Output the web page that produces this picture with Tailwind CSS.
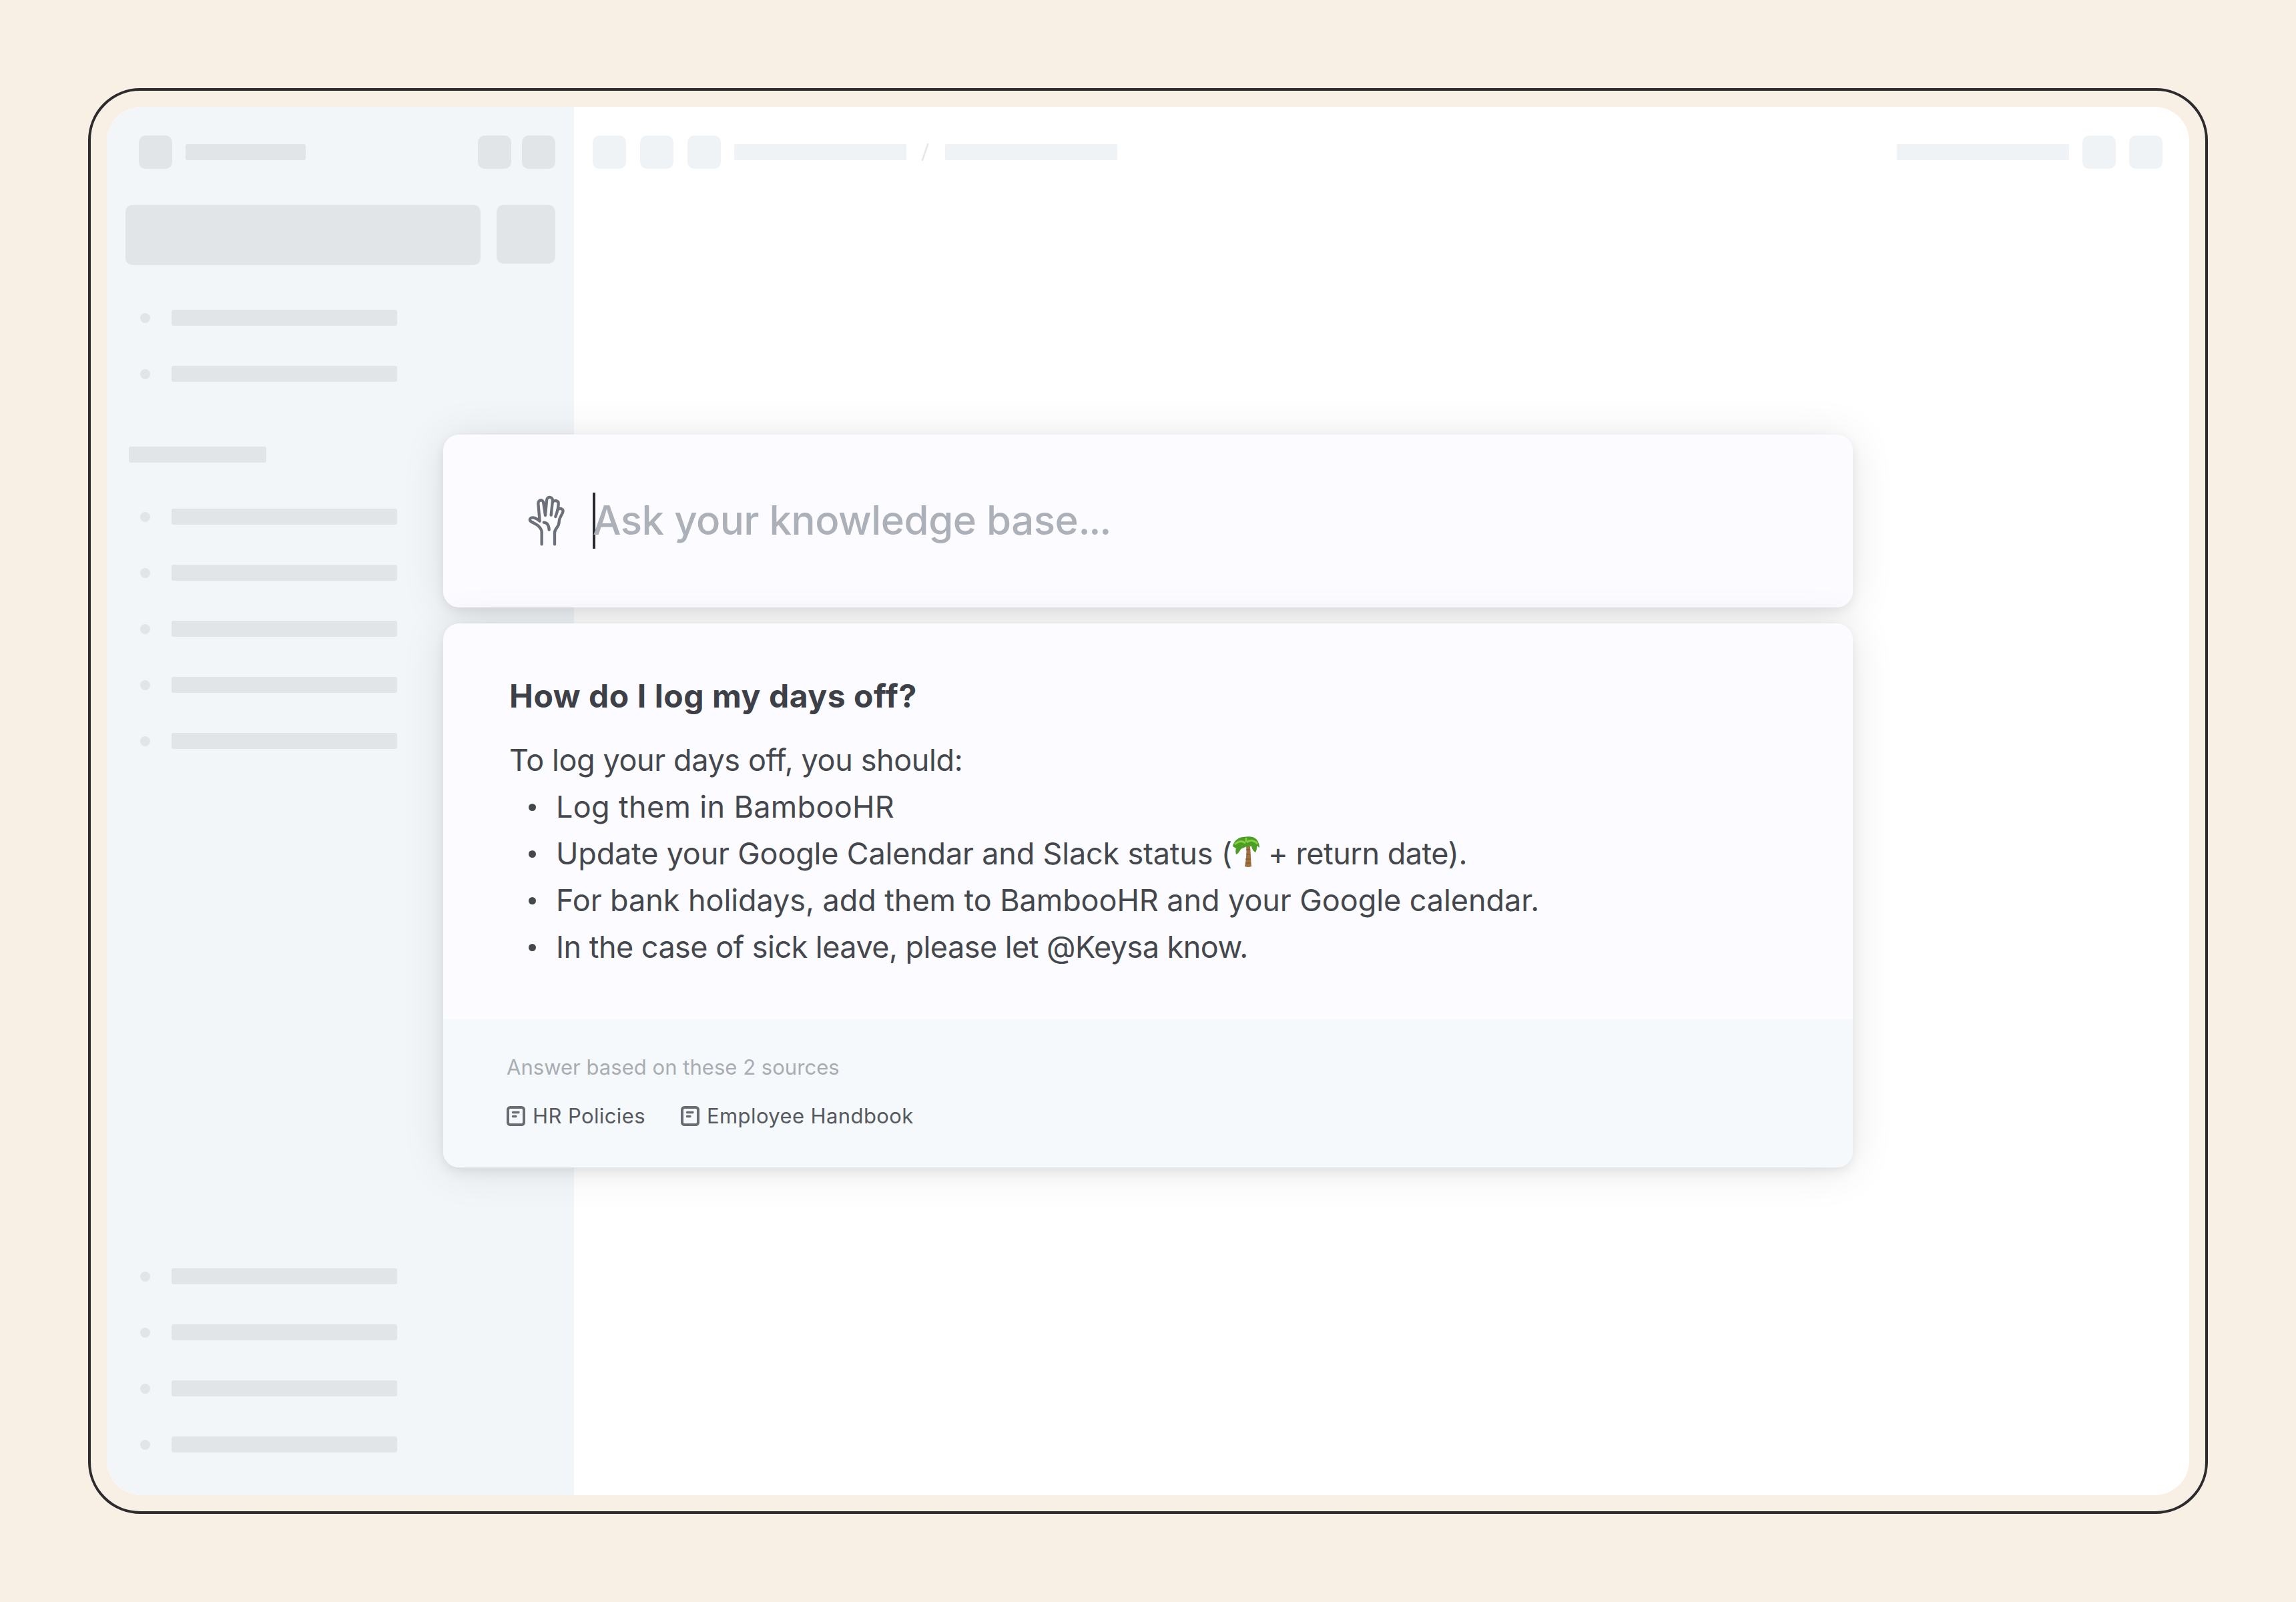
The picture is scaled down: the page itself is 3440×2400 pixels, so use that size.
<!DOCTYPE html>
<html lang="en">
<head>
  <meta charset="UTF-8" />
  <meta name="viewport" content="width=device-width, initial-scale=1.0"/>
  <title>Ask your knowledge base</title>
  <!-- Load Tailwind CSS -->
  <script src="https://cdn.jsdelivr.net/npm/@tailwindcss/browser@4"></script>
</head>
<body class="w-[3440px] h-[2400px] p-[132px] bg-[#f9f0e5] font-['Inter',sans-serif] overflow-hidden">

  <!-- Outlined frame around the app window -->
  <div class="relative h-full p-6 border-4 border-[#2d2b2b] rounded-[78px]">
    <div class="flex h-full bg-white rounded-[52px] overflow-hidden">

      <!-- Sidebar skeleton -->
      <aside class="flex flex-col w-[700px] h-full bg-[#f2f6f9] pt-[43px] pb-16">
        <div class="flex items-center pl-12 pr-7">
          <div class="size-[50px] rounded-[10px] bg-[#e1e5e8]"></div>
          <div class="ml-5 w-[180px] h-6 rounded-[3px] bg-[#e1e5e8]"></div>
          <div class="ml-auto size-[50px] rounded-[10px] bg-[#e1e5e8]"></div>
          <div class="ml-4 size-[50px] rounded-[10px] bg-[#e1e5e8]"></div>
        </div>

        <div class="flex items-start justify-between mt-[54px] pl-7 pr-7">
          <div class="w-[532px] h-[90px] rounded-[10px] bg-[#e1e5e8]"></div>
          <div class="w-[88px] h-[88px] rounded-[10px] bg-[#e1e5e8]"></div>
        </div>

        <ul class="flex flex-col gap-[60px] mt-[67px] pl-[50px]" data-rows="2"></ul>

        <div class="ml-[33px] mt-[97px] w-[206px] h-6 rounded-[3px] bg-[#e1e5e8]"></div>
        <ul class="flex flex-col gap-[60px] mt-[69px] pl-[50px]" data-rows="5"></ul>

        <ul class="flex flex-col gap-[60px] mt-auto pl-[50px]" data-rows="4"></ul>
      </aside>

      <!-- Top bar skeleton -->
      <main class="flex-1 pt-[43px] pl-7 pr-10">
        <div class="flex items-center">
          <div class="flex gap-[21px]">
            <div class="size-[50px] rounded-[10px] bg-[#f0f3f6]"></div>
            <div class="size-[50px] rounded-[10px] bg-[#f0f3f6]"></div>
            <div class="size-[50px] rounded-[10px] bg-[#f0f3f6]"></div>
          </div>
          <div class="ml-5 w-[258px] h-6 rounded-[2px] bg-[#f0f3f6]"></div>
          <svg class="ml-[22px] w-3 h-[26px]" viewBox="0 0 12 26" fill="none" stroke="#e4e6e9" stroke-width="2.5"><path d="M10.5 0 1.5 26"/></svg>
          <div class="ml-6 w-[258px] h-6 rounded-[2px] bg-[#f0f3f6]"></div>
          <div class="ml-auto w-[258px] h-6 rounded-[2px] bg-[#f0f3f6]"></div>
          <div class="ml-5 size-[50px] rounded-[10px] bg-[#f0f3f6]"></div>
          <div class="ml-5 size-[50px] rounded-[10px] bg-[#f0f3f6]"></div>
        </div>
      </main>
    </div>

    <!-- Ask dialog, floats over the app -->
    <div class="absolute left-[528px] top-[515px] w-[2112px] flex flex-col gap-6">
      <div class="flex items-center h-[259px] pl-[126px] rounded-3xl bg-[#fcfbff] shadow-[0_6px_16px_rgba(0,0,0,0.07),0_4px_64px_rgba(0,0,0,0.1)]">
        <svg class="w-[57px] h-[77px] -mt-0.5" viewBox="60 64 171 231" fill="none" stroke="#6b707b" stroke-width="13" stroke-linecap="round" stroke-linejoin="round">
          <path d="M125 287V232C125 220 119 213 108 203C98 195 90 192 80 187C70 182 70 176 74 171C82 163 100 168 116 183L109 103C109 86 131 84 133 102L141 157L147 92C147 70 173 71 174 90L167 156"/>
          <path d="M175 95C185 88 201 91 200 105C200 123 195 141 187 163"/>
          <path d="M200 129C211 123 223 130 220 141C217 154 203 168 203 186C203 211 183 215 183 235V287"/>
          <path d="M134 189C150 190 157 201 158 222"/>
        </svg>
        <div class="ml-[41px] w-1 h-[84px] -mt-0.5 bg-[#27292c]"></div>
        <div class="-ml-1 -mt-1 text-[60px] leading-none font-medium text-[#acb0b8] whitespace-nowrap tracking-[-0.5px]">Ask your knowledge base<span class="tracking-[-2.3px]">...</span></div>
      </div>

      <div class="h-[815px] rounded-3xl overflow-hidden bg-[#fcfbff] shadow-[0_6px_16px_rgba(0,0,0,0.07),0_4px_64px_rgba(0,0,0,0.1)]">
        <div class="h-[593px] pt-[74px] pl-[99px] text-[45px] leading-[70px] text-[#44474c] whitespace-nowrap">
          <h2 class="text-[48px] font-bold text-[#3d4046] tracking-[0.55px]">How do I log my days off?</h2>
          <p class="mt-[26px] tracking-[-0.4px]">To log your days off, you should:</p>
          <ul class="pl-[29px]">
            <li class="flex items-center gap-[30px]"><span class="size-[11px] rounded-full bg-[#44474c]"></span><span class="tracking-[0.33px]">Log them in BambooHR</span></li>
            <li class="flex items-center gap-[30px]"><span class="size-[11px] rounded-full bg-[#44474c]"></span><span class="tracking-[-0.2px]">Update your Google Calendar and Slack status (<svg class="inline-block w-[42px] h-[46px] -mt-3.5" viewBox="0 0 42 46">
                <path d="M21 13c4-2 5 0 6 3 1 9 1 20 2 29q-5 2-10 0c2-10 3-20 2-32z" fill="#a0703f"/>
                <path d="M21 20h6M21 27h6M20 34h8M20 40h8" stroke="#7a5230" stroke-width="1.2"/>
                <path d="M22 15C17 18 14 17 12 21c-2 3-3 5-6 6-1-4-1-6 0-9l-5-3C2 7 10 1 17 1c5-1 10-1 14 0 6 2 10 8 10 16l-4-3c0 4 0 7-2 10-4-2-5-6-6-9z" fill="#4c9f22"/>
                <path d="M20 10C15 6 9 7 4 12M22 9c4-4 10-4 16 2M21 8V2" stroke="#86ce45" stroke-width="3" fill="none"/>
              </svg><span class="tracking-[-0.5px]"> + return date).</span></span></li>
            <li class="flex items-center gap-[30px]"><span class="size-[11px] rounded-full bg-[#44474c]"></span><span class="tracking-[-0.07px]">For bank holidays, add them to BambooHR and your Google calendar.</span></li>
            <li class="flex items-center gap-[30px]"><span class="size-[11px] rounded-full bg-[#44474c]"></span><span class="tracking-[-0.54px]">In the case of sick leave, please let @Keysa know.</span></li>
          </ul>
        </div>

        <!-- Sources -->
        <div class="h-[222px] pt-[47px] pl-[95px] bg-[#f5f9fb] text-[31px] leading-[50px] whitespace-nowrap">
          <p class="text-[#a9adb3] tracking-[0.03px]">Answer based on these 2 sources</p>
          <div class="flex mt-[23px] text-[#565a60]">
            <div class="flex items-center gap-[11px] w-[261px]">
              <svg class="w-7 h-[30px]" viewBox="0 0 28 30" fill="none" stroke="#696d73" stroke-width="4" stroke-linecap="round"><rect x="2" y="2" width="24" height="26" rx="3.5"/><path d="M9.500 9.500h8.500M9.500 15.500h4.500" stroke-width="3.4"/></svg>
              <span class="tracking-[0.4px]">HR Policies</span>
            </div>
            <div class="flex items-center gap-[11px]">
              <svg class="w-7 h-[30px]" viewBox="0 0 28 30" fill="none" stroke="#696d73" stroke-width="4" stroke-linecap="round"><rect x="2" y="2" width="24" height="26" rx="3.5"/><path d="M9.500 9.500h8.500M9.500 15.500h4.500" stroke-width="3.4"/></svg>
              <span class="tracking-[0.4px]">Employee Handbook</span>
            </div>
          </div>
        </div>
      </div>
    </div>
  </div>

  <script>
    // Fill each sidebar list with its number of skeleton rows
    document.querySelectorAll('[data-rows]').forEach((list) => {
      for (let i = 0; i < Number(list.dataset.rows); i++) {
        const row = document.createElement('li');
        row.className = 'flex items-center gap-8';
        row.innerHTML = `
          <span class="size-[15px] rounded-full bg-[#e1e5e8]"></span>
          <span class="w-[338px] h-6 rounded-[3px] bg-[#e1e5e8]"></span>
        `;
        list.appendChild(row);
      }
    });
  </script>
</body>
</html>
